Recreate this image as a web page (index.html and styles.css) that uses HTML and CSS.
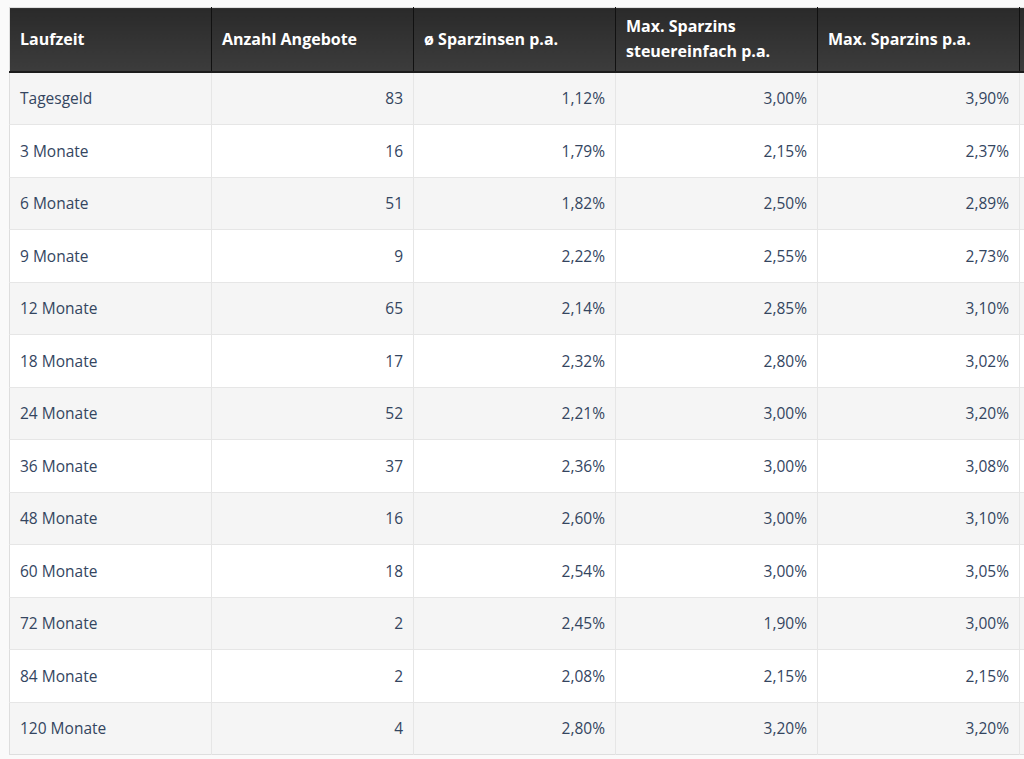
FILE: index.html
```html
<!DOCTYPE html>
<html lang="de">
<head>
<meta charset="utf-8">
<title>Sparzinsen</title>
<link rel="stylesheet" href="styles.css">
</head>
<body>
<div class="table-wrap">
<table class="rates">
  <thead>
    <tr>
      <th>Laufzeit</th>
      <th>Anzahl Angebote</th>
      <th>ø Sparzinsen p.a.</th>
      <th>Max. Sparzins steuereinfach p.a.</th>
      <th>Max. Sparzins p.a.</th>
      <th>&nbsp;</th>
    </tr>
  </thead>
  <tbody>
    <tr><td class="l">Tagesgeld</td><td>83</td><td>1,12%</td><td>3,00%</td><td>3,90%</td><td></td></tr>
    <tr><td class="l">3 Monate</td><td>16</td><td>1,79%</td><td>2,15%</td><td>2,37%</td><td></td></tr>
    <tr><td class="l">6 Monate</td><td>51</td><td>1,82%</td><td>2,50%</td><td>2,89%</td><td></td></tr>
    <tr><td class="l">9 Monate</td><td>9</td><td>2,22%</td><td>2,55%</td><td>2,73%</td><td></td></tr>
    <tr><td class="l">12 Monate</td><td>65</td><td>2,14%</td><td>2,85%</td><td>3,10%</td><td></td></tr>
    <tr><td class="l">18 Monate</td><td>17</td><td>2,32%</td><td>2,80%</td><td>3,02%</td><td></td></tr>
    <tr><td class="l">24 Monate</td><td>52</td><td>2,21%</td><td>3,00%</td><td>3,20%</td><td></td></tr>
    <tr><td class="l">36 Monate</td><td>37</td><td>2,36%</td><td>3,00%</td><td>3,08%</td><td></td></tr>
    <tr><td class="l">48 Monate</td><td>16</td><td>2,60%</td><td>3,00%</td><td>3,10%</td><td></td></tr>
    <tr><td class="l">60 Monate</td><td>18</td><td>2,54%</td><td>3,00%</td><td>3,05%</td><td></td></tr>
    <tr><td class="l">72 Monate</td><td>2</td><td>2,45%</td><td>1,90%</td><td>3,00%</td><td></td></tr>
    <tr><td class="l">84 Monate</td><td>2</td><td>2,08%</td><td>2,15%</td><td>2,15%</td><td></td></tr>
    <tr><td class="l">120 Monate</td><td>4</td><td>2,80%</td><td>3,20%</td><td>3,20%</td><td></td></tr>
  </tbody>
</table>
</div>
</body>
</html>
```
FILE: styles.css
```css
html {
  overflow: hidden;
  background: #fafafa;
}
body {
  margin: 7px 0 0 9px;
  font-family: "Open Sans", "Noto Sans", sans-serif;
  font-size: 15.5px;
  color: #34455f;
}
.table-wrap {
  overflow: hidden;
}
.rates {
  border-collapse: collapse;
  table-layout: fixed;
  width: 1212px;
  border: 1px solid #dedede;
}
.rates th {
  width: 202px;
  box-sizing: border-box;
  height: 64px;
  padding: 0 10px;
  text-align: left;
  font-size: 16px;
  font-weight: 700;
  color: #ffffff;
  line-height: 25px;
  background: linear-gradient(#2a2a2a, #3c3c3c);
  border-left: 1px solid #111111;
  border-bottom: 2px solid #1c1c1c;
  vertical-align: middle;
}
.rates th:first-child {
  border-left: none;
}
.rates td {
  height: 51.5px;
  padding: 0 10px;
  text-align: right;
  border-left: 1px solid #e6e6e6;
  border-top: 1px solid #e6e6e6;
  vertical-align: middle;
  white-space: nowrap;
}
.rates td.l {
  text-align: left;
  border-left: none;
}
.rates tbody tr:nth-child(odd) td {
  background: #f5f5f5;
}
.rates tbody tr:nth-child(even) td {
  background: #ffffff;
}
```
